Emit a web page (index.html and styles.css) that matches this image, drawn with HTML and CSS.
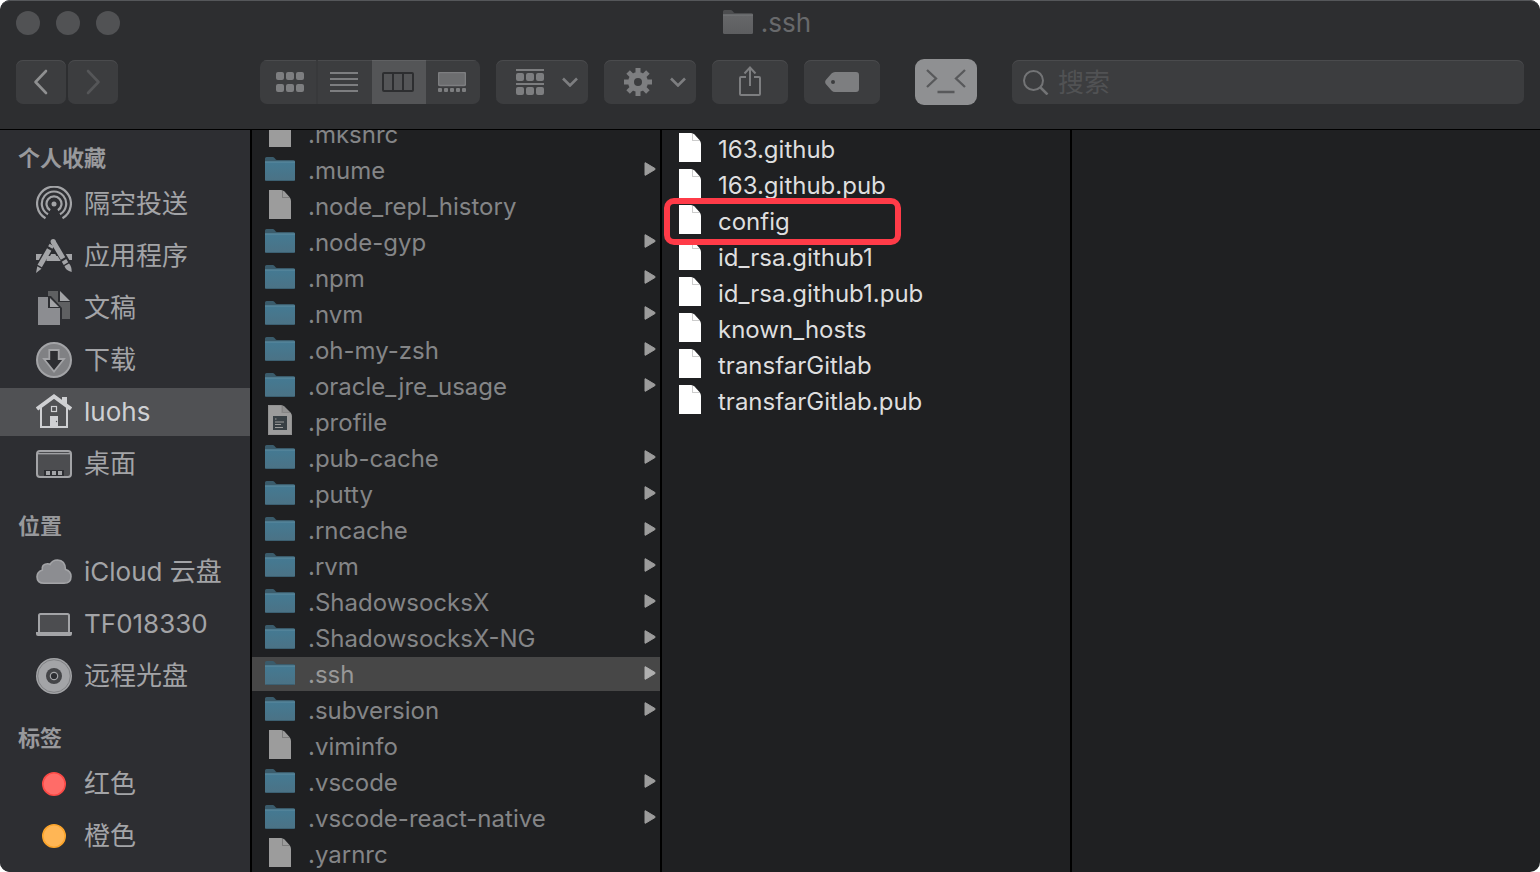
FILE: index.html
```html
<!DOCTYPE html>
<html lang="zh-CN">
<head>
<meta charset="utf-8">
<title>.ssh</title>
<link rel="stylesheet" href="styles.css">
</head>
<body>
<svg class="sprite" width="0" height="0" aria-hidden="true">
  <defs>
    <linearGradient id="folder-front" x1="0" y1="0" x2="0" y2="1">
      <stop offset="0" stop-color="#447a93"/><stop offset="1" stop-color="#4b7285"/>
    </linearGradient>
    <linearGradient id="folder-grey" x1="0" y1="0" x2="0" y2="1">
      <stop offset="0" stop-color="#666769"/><stop offset="1" stop-color="#5d5e60"/>
    </linearGradient>
    <symbol id="folder" viewBox="0 0 30 24">
      <path d="M0 6V1.500Q0 0 1.500 0H8Q9 0 10 1.500T12 3H28.500Q30 3 30 4.500V8H0Z" fill="#3a5b6b"/>
      <path d="M0 4.500H30V22.500Q30 24 28.500 24H1.500Q0 24 0 22.500Z" fill="url(#folder-front)"/>
      <path d="M0 5H30" stroke="#5f8b9f"/><path d="M1 23.500H29" stroke="#3c6072"/>
    </symbol>
    <symbol id="folder-title" viewBox="0 0 30 24">
      <path d="M0 6V1.500Q0 0 1.500 0H8Q9 0 10 1.500T12 3H28.500Q30 3 30 4.500V8H0Z" fill="#4c4d4f"/>
      <path d="M0 4.500H30V22.500Q30 24 28.500 24H1.500Q0 24 0 22.500Z" fill="url(#folder-grey)"/>
      <path d="M0 5H30" stroke="#77787a"/>
    </symbol>
    <symbol id="doc" viewBox="0 0 22 29">
      <path d="M0 0H12Q14 0 15.500 1.500L20.500 7Q22 9 22 11V29H0Z" fill="currentColor"/>
      <path d="M13.500 0.500V7.500H20.500" fill="none" stroke="#000" stroke-opacity=".2"/>
    </symbol>
    <symbol id="doc-text" viewBox="0 0 24 30">
      <path d="M0 0H13Q15 0 16.500 1.500L22.500 7.500Q24 9 24 11V30H0Z" fill="#919191"/>
      <path d="M1 1H13V8H23V29H1Z" fill="#9c9c9c"/>
      <path d="M14.500 1V7.500H22" fill="none" stroke="#858585"/>
      <rect x="5" y="11" width="14" height="14" fill="#384045"/>
      <path d="M7 14H8.500M7 17H16M7 19.500H13M7 22.500H15" stroke="#9c9c9c"/>
    </symbol>
    <symbol id="arrow" viewBox="0 0 12 14">
      <path d="M1 .8Q1 .5 1.500 .8L11 6.500Q11.500 7 11 7.500L1.500 13.200Q1 13.500 1 13.200Z" fill="currentColor" stroke="currentColor"/>
    </symbol>
    <symbol id="chevron" viewBox="0 0 16 10">
      <path d="M1 1.500L8 8.500L15 1.500" fill="none" stroke="currentColor" stroke-width="2.600"/>
    </symbol>
  </defs>
</svg>

<div class="window">
  <header class="header">
    <div class="titlebar">
      <div class="lights">
        <button class="light" aria-label="关闭"></button>
        <button class="light" aria-label="最小化"></button>
        <button class="light" aria-label="缩放"></button>
      </div>
      <h1 class="title"><svg class="folder"><use href="#folder-title"/></svg>.ssh</h1>
    </div>
    <div class="toolbar">
      <div class="nav">
        <button class="tool nav-button" aria-label="后退"><svg width="16" height="26" viewBox="0 0 16 26" fill="none" stroke="#8f9091" stroke-width="2.600" stroke-linecap="round" stroke-linejoin="round"><path d="M13 2L2.500 13L13 24"/></svg></button>
        <button class="tool nav-button" aria-label="前进"><svg width="16" height="26" viewBox="0 0 16 26" fill="none" stroke="#555658" stroke-width="2.600" stroke-linecap="round" stroke-linejoin="round"><path d="M3 2L13.500 13L3 24"/></svg></button>
      </div>
      <div class="views">
        <button class="view" aria-label="图标"><svg width="28" height="20" viewBox="0 0 28 20" fill="currentColor"><rect width="8" height="8" rx="2"/><rect x="10" width="8" height="8" rx="2"/><rect x="20" width="8" height="8" rx="2"/><rect y="12" width="8" height="8" rx="2"/><rect x="10" y="12" width="8" height="8" rx="2"/><rect x="20" y="12" width="8" height="8" rx="2"/></svg></button>
        <button class="view" aria-label="列表"><svg width="28" height="20" viewBox="0 0 28 20" stroke="currentColor" stroke-width="2"><path d="M0 1H28M0 7H28M0 13H28M0 19H28"/></svg></button>
        <button class="view view-on" aria-label="分栏" aria-pressed="true"><svg width="32" height="20" viewBox="0 0 32 20" fill="none" stroke="currentColor" stroke-width="2"><rect x="1" y="1" width="30" height="18" rx="1"/><path d="M11 1V19M21 1V19"/></svg></button>
        <button class="view" aria-label="画廊"><svg width="28" height="20" viewBox="0 0 28 20" fill="currentColor"><rect x=".5" y=".5" width="27" height="13" rx="1.500" fill="#6c6d6f" stroke="currentColor" stroke-width="1.500"/><rect y="16" width="4" height="4" rx="1"/><rect x="6" y="16" width="4" height="4" rx="1"/><rect x="12" y="16" width="4" height="4" rx="1"/><rect x="18" y="16" width="4" height="4" rx="1"/><rect x="24" y="16" width="4" height="4" rx="1"/></svg></button>
      </div>
      <button class="tool menu-button" aria-label="分组"><svg width="28" height="26" viewBox="0 0 28 26" fill="currentColor"><rect width="28" height="2"/><rect y="14" width="28" height="2"/><rect y="4" width="8" height="8" rx="2"/><rect x="10" y="4" width="8" height="8" rx="2"/><rect x="20" y="4" width="8" height="8" rx="2"/><rect y="18" width="8" height="8" rx="2"/><rect x="10" y="18" width="8" height="8" rx="2"/><rect x="20" y="18" width="8" height="8" rx="2"/></svg><svg class="chevron"><use href="#chevron"/></svg></button>
      <button class="tool menu-button" aria-label="操作"><svg width="28" height="28" viewBox="-14 -14 28 28"><g stroke="currentColor" stroke-width="5"><path d="M0 -14V-8M0 14V8M-14 0H-8M14 0H8"/><path d="M0 -14V-8M0 14V8M-14 0H-8M14 0H8" transform="rotate(45)"/></g><circle r="7" fill="none" stroke="currentColor" stroke-width="6"/></svg><svg class="chevron"><use href="#chevron"/></svg></button>
      <button class="tool wide-button" aria-label="共享"><svg width="24" height="32" viewBox="0 0 24 32" fill="none" stroke="currentColor" stroke-width="2"><path d="M8 11H3Q2 11 2 12V28Q2 29 3 29H21Q22 29 22 28V12Q22 11 21 11H16M12 20V2M6.500 7.500L12 1.500L17.500 7.500"/></svg></button>
      <button class="tool wide-button" aria-label="标记"><svg width="34" height="20" viewBox="0 0 34 20"><path fill="currentColor" fill-rule="evenodd" d="M10 0H31Q34 0 34 3V17Q34 20 31 20H10Q8 20 6.500 18.500L.8 12Q-.5 10 .8 8L6.500 1.500Q8 0 10 0ZM8 8A2 2 0 1 0 8 12A2 2 0 1 0 8 8Z"/></svg></button>
      <button class="face" aria-label="打开终端"><svg width="40" height="26" viewBox="0 0 40 26" fill="none" stroke="#58595b" stroke-width="2.300"><path d="M1 1L10 9.500L1 18M39 1L30 9.500L39 18M11.500 23H28.500"/></svg></button>
      <label class="tool search">
        <svg width="26" height="26" viewBox="0 0 26 26" fill="none" stroke="#737476" stroke-width="2"><circle cx="10.500" cy="11.500" r="9.500"/><path d="M17 18L24.500 25.500" stroke-width="2.500"/></svg>
        <input type="search" placeholder="搜索" aria-label="搜索">
      </label>
    </div>
  </header>

  <div class="body">
    <nav class="sidebar">
      <section class="group">
        <h2>个人收藏</h2>
        <ul>
          <li><a href="#airdrop"><svg viewBox="0 0 36 36" fill="none" stroke="currentColor" stroke-width="2.200"><path d="M9.500 32.200A16.900 16.900 0 1 1 26.500 32.200M12 28.300A12.200 12.200 0 1 1 24 28.300M14.100 24.200A7.500 7.500 0 1 1 21.900 24.200"/><circle cx="18" cy="18" r="2.500" fill="currentColor" stroke="none"/></svg>隔空投送</a></li>
          <li><a href="#apps"><svg viewBox="0 0 36 36"><path d="M0 19H36" stroke="currentColor" stroke-width="6"/><path d="M16 6L3 30M17 4L33 32" stroke="#2d2e32" stroke-width="8"/><path d="M10.500 20.500H25" stroke="currentColor" stroke-width="5"/><path d="M18 4L30.500 25" stroke="#2d2e32" stroke-width="8"/><path d="M15.800 7L14.300 9.600M13.200 11.600L3.700 28" stroke="currentColor" stroke-width="5"/><path d="M1.300 28.300L5.500 30.700L0 35Z" fill="currentColor"/><path d="M17.300 4L27 20.500M28 22.300L30 25.600" stroke="currentColor" stroke-width="5.200"/><circle cx="17.200" cy="3.500" r="2.600" fill="currentColor"/><path d="M28.500 28L33 25.400Q35.800 28 35.700 34Q29.500 32.500 28.500 28Z" fill="currentColor"/></svg>应用程序</a></li>
          <li><a href="#documents"><svg viewBox="0 0 36 36"><path d="M12 1H22V12H34V29H26V18L15 6H12Z" fill="#5f6062"/><path d="M24 1V11H34Z" fill="#a3a4a7"/><path d="M2 7H12V18H24V35H2Z" fill="#8c8d91"/><path d="M14 8V17H23Z" fill="#a3a4a7"/></svg>文稿</a></li>
          <li><a href="#downloads"><svg viewBox="0 0 36 36"><circle cx="18" cy="18" r="17" fill="#808184" stroke="currentColor" stroke-width="2"/><path d="M13.300 8H22.700V17H28L18 29.500L8 17H13.300Z" fill="#2d2e32" stroke="currentColor" stroke-width="1.800"/></svg>下载</a></li>
          <li><a class="current" href="#home" aria-current="page"><svg viewBox="0 0 36 36"><path d="M26 3H31V14L26 9Z" fill="currentColor"/><path d="M5 13V33H31V13" fill="none" stroke="currentColor" stroke-width="2"/><path d="M1 15L18 2.500L35 15" fill="none" stroke="currentColor" stroke-width="4"/><rect x="15.500" y="12.500" width="5" height="5" fill="none" stroke="currentColor" stroke-width="1.200"/><path d="M14 22H22V33H14Z" fill="currentColor"/><circle cx="20.500" cy="27.500" r=".7" fill="#505154"/></svg>luohs</a></li>
          <li><a href="#desktop"><svg viewBox="0 0 36 36"><rect x="1" y="5" width="34" height="26" rx="3" fill="#4c4d50" stroke="currentColor" stroke-width="2"/><path d="M2 7.700H34" stroke="currentColor" stroke-width="1.300"/><path d="M8 24H28V30H8Z" fill="#2d2e32"/><path d="M10 25H14V29H10ZM16 25H20V29H16ZM22 25H26V29H22Z" fill="currentColor"/></svg>桌面</a></li>
        </ul>
      </section>
      <section class="group">
        <h2>位置</h2>
        <ul>
          <li><a href="#icloud"><svg viewBox="0 0 36 36"><path d="M8 29.300Q1 29.300 1 22.800Q1 17.800 6.300 16Q5.500 10.200 11 9.800Q13 9.600 14 10.500Q16.500 6 21.500 6Q29.300 6.300 29.500 15.500Q35 17 35 22.500Q35 29.300 28 29.300Z" fill="#8c8d91" stroke="currentColor" stroke-width="1.600"/></svg>iCloud 云盘</a></li>
          <li><a href="#tf018330"><svg viewBox="0 0 36 36"><rect x="3" y="8" width="30" height="19" rx="1.500" fill="#4c4d50" stroke="currentColor" stroke-width="2"/><path d="M0 26H36V28Q36 30 34 30H2Q0 30 0 28Z" fill="currentColor"/></svg>TF018330</a></li>
          <li><a href="#disc"><svg viewBox="0 0 36 36"><circle cx="18" cy="18" r="18" fill="#a3a4a7"/><circle cx="18" cy="18" r="16.300" fill="none" stroke="#77787b" stroke-width=".8"/><circle cx="18" cy="18" r="8" fill="#444548"/><circle cx="18" cy="18" r="3.700" fill="#2d2e32" stroke="#a3a4a7" stroke-width="1.200"/></svg>远程光盘</a></li>
        </ul>
      </section>
      <section class="group">
        <h2>标签</h2>
        <ul>
          <li><a href="#red"><svg viewBox="0 0 36 36"><circle cx="18" cy="18" r="11.200" fill="#ff6c68" stroke="#fb4a46" stroke-width="1.600"/></svg>红色</a></li>
          <li><a href="#orange"><svg viewBox="0 0 36 36"><circle cx="18" cy="18" r="11.200" fill="#ffb655" stroke="#fba42b" stroke-width="1.600"/></svg>橙色</a></li>
        </ul>
      </section>
    </nav>

    <ul class="column column-home">
      <li><button class="row"><span class="icon"><svg class="doc"><use href="#doc"/></svg></span><span class="name">.mkshrc</span></button></li>
      <li><button class="row"><span class="icon"><svg class="folder"><use href="#folder"/></svg></span><span class="name">.mume</span><svg class="arrow"><use href="#arrow"/></svg></button></li>
      <li><button class="row"><span class="icon"><svg class="doc"><use href="#doc"/></svg></span><span class="name">.node_repl_history</span></button></li>
      <li><button class="row"><span class="icon"><svg class="folder"><use href="#folder"/></svg></span><span class="name">.node-gyp</span><svg class="arrow"><use href="#arrow"/></svg></button></li>
      <li><button class="row"><span class="icon"><svg class="folder"><use href="#folder"/></svg></span><span class="name">.npm</span><svg class="arrow"><use href="#arrow"/></svg></button></li>
      <li><button class="row"><span class="icon"><svg class="folder"><use href="#folder"/></svg></span><span class="name">.nvm</span><svg class="arrow"><use href="#arrow"/></svg></button></li>
      <li><button class="row"><span class="icon"><svg class="folder"><use href="#folder"/></svg></span><span class="name">.oh-my-zsh</span><svg class="arrow"><use href="#arrow"/></svg></button></li>
      <li><button class="row"><span class="icon"><svg class="folder"><use href="#folder"/></svg></span><span class="name">.oracle_jre_usage</span><svg class="arrow"><use href="#arrow"/></svg></button></li>
      <li><button class="row"><span class="icon"><svg class="doc-text"><use href="#doc-text"/></svg></span><span class="name">.profile</span></button></li>
      <li><button class="row"><span class="icon"><svg class="folder"><use href="#folder"/></svg></span><span class="name">.pub-cache</span><svg class="arrow"><use href="#arrow"/></svg></button></li>
      <li><button class="row"><span class="icon"><svg class="folder"><use href="#folder"/></svg></span><span class="name">.putty</span><svg class="arrow"><use href="#arrow"/></svg></button></li>
      <li><button class="row"><span class="icon"><svg class="folder"><use href="#folder"/></svg></span><span class="name">.rncache</span><svg class="arrow"><use href="#arrow"/></svg></button></li>
      <li><button class="row"><span class="icon"><svg class="folder"><use href="#folder"/></svg></span><span class="name">.rvm</span><svg class="arrow"><use href="#arrow"/></svg></button></li>
      <li><button class="row"><span class="icon"><svg class="folder"><use href="#folder"/></svg></span><span class="name">.ShadowsocksX</span><svg class="arrow"><use href="#arrow"/></svg></button></li>
      <li><button class="row"><span class="icon"><svg class="folder"><use href="#folder"/></svg></span><span class="name">.ShadowsocksX-NG</span><svg class="arrow"><use href="#arrow"/></svg></button></li>
      <li><button class="row row-open"><span class="icon"><svg class="folder"><use href="#folder"/></svg></span><span class="name">.ssh</span><svg class="arrow"><use href="#arrow"/></svg></button></li>
      <li><button class="row"><span class="icon"><svg class="folder"><use href="#folder"/></svg></span><span class="name">.subversion</span><svg class="arrow"><use href="#arrow"/></svg></button></li>
      <li><button class="row"><span class="icon"><svg class="doc"><use href="#doc"/></svg></span><span class="name">.viminfo</span></button></li>
      <li><button class="row"><span class="icon"><svg class="folder"><use href="#folder"/></svg></span><span class="name">.vscode</span><svg class="arrow"><use href="#arrow"/></svg></button></li>
      <li><button class="row"><span class="icon"><svg class="folder"><use href="#folder"/></svg></span><span class="name">.vscode-react-native</span><svg class="arrow"><use href="#arrow"/></svg></button></li>
      <li><button class="row"><span class="icon"><svg class="doc"><use href="#doc"/></svg></span><span class="name">.yarnrc</span></button></li>
    </ul>

    <ul class="column column-ssh">
      <li><button class="row"><span class="icon"><svg class="doc"><use href="#doc"/></svg></span><span class="name">163.github</span></button></li>
      <li><button class="row"><span class="icon"><svg class="doc"><use href="#doc"/></svg></span><span class="name">163.github.pub</span></button></li>
      <li class="marked"><button class="row"><span class="icon"><svg class="doc"><use href="#doc"/></svg></span><span class="name">config</span></button></li>
      <li><button class="row"><span class="icon"><svg class="doc"><use href="#doc"/></svg></span><span class="name">id_rsa.github1</span></button></li>
      <li><button class="row"><span class="icon"><svg class="doc"><use href="#doc"/></svg></span><span class="name">id_rsa.github1.pub</span></button></li>
      <li><button class="row"><span class="icon"><svg class="doc"><use href="#doc"/></svg></span><span class="name">known_hosts</span></button></li>
      <li><button class="row"><span class="icon"><svg class="doc"><use href="#doc"/></svg></span><span class="name">transfarGitlab</span></button></li>
      <li><button class="row"><span class="icon"><svg class="doc"><use href="#doc"/></svg></span><span class="name">transfarGitlab.pub</span></button></li>
    </ul>

    <div class="preview"></div>
  </div>
</div>
</body>
</html>
```
FILE: styles.css
```css
*, *::after { box-sizing: border-box; }

body {
  margin: 0;
  background: #fff;
  font-family: Inter, "Noto Sans CJK SC", sans-serif;
  font-size: 24px;
}

h1, h2, ul { margin: 0; padding: 0; font-weight: 400; list-style: none; }
svg { display: block; flex: none; }
.sprite { position: absolute; }

button, input {
  margin: 0;
  padding: 0;
  border: 0;
  background: none;
  color: inherit;
  font: inherit;
}

.window {
  display: flex;
  flex-direction: column;
  height: 100vh;
  overflow: hidden;
  border-radius: 10px;
  background: #1f2022;
}

/* Header */
.header {
  flex: none;
  height: 130px;
  border-top: 1px solid #55575a;
  border-bottom: 1px solid #000;
  border-radius: 10px 10px 0 0;
  background: #2d2e30;
}
.titlebar {
  display: grid;
  grid-template-columns: 1fr auto 1fr;
  align-items: center;
  height: 43px;
  padding: 0 22px 0 16px;
}
.lights { display: flex; gap: 16px; }
.light { width: 24px; height: 24px; border-radius: 50%; background: #515254; }
.title {
  display: flex;
  align-items: center;
  gap: 8px;
  color: #68696b;
  font-size: 26px;
  line-height: 32px;
}
.title .folder { margin-bottom: 2px; }

.toolbar {
  display: flex;
  align-items: center;
  height: 44px;
  margin-top: 16px;
  padding: 0 16px;
  gap: 16px;
  color: #7d7e80;
}
.tool, .view { background: #3c3d3f; box-shadow: inset 0 1px #4a4b4d; }
.tool {
  display: flex;
  align-items: center;
  justify-content: center;
  height: 44px;
  border-radius: 7px;
}
.nav { display: flex; gap: 2px; margin-right: 126px; }
.nav-button { width: 50px; }
.views { display: flex; height: 44px; overflow: hidden; border-radius: 7px; }
.view { display: flex; align-items: center; justify-content: center; width: 54px; padding-right: 2px; }
.view:first-child { width: 58px; padding: 0 0 0 4px; border-right: 2px solid #38393b; }
.view-on { background: #545557; color: #2d2e30; box-shadow: inset 0 1px #606163; }
.menu-button { width: 92px; justify-content: space-between; padding: 0 10px 0 20px; }
.chevron { width: 16px; height: 10px; }
.wide-button { width: 76px; }
.face {
  display: flex;
  justify-content: center;
  align-items: center;
  width: 62px;
  height: 46px;
  margin: 0 19px;
  border-radius: 9px;
  background: #8f9092;
}
.search { flex: 1; justify-content: flex-start; gap: 9px; padding: 0 11px; }
.search input { flex: 1; min-width: 0; outline: 0; font-size: 26px; }
.search input::placeholder { color: #515254; opacity: 1; }

/* Body */
.body { display: flex; flex: 1; min-height: 0; }

.sidebar {
  flex: none;
  width: 252px;
  padding-top: 6px;
  border-right: 2px solid #000;
  overflow: hidden;
  background: #2d2e32;
  color: #a3a4a7;
}
.group { margin-bottom: 16px; }
.group h2 { padding-left: 18px; font-size: 22px; font-weight: 600; line-height: 44px; color: #98999c; }
.group ul { display: grid; gap: 4px; }
.group a {
  display: flex;
  align-items: center;
  height: 48px;
  padding-left: 36px;
  color: inherit;
  font-size: 26px;
  line-height: 48px;
  text-decoration: none;
}
.group a svg { width: 36px; height: 36px; margin-right: 12px; }
.group .current { background: #505154; color: #cfd0d3; }

.column { flex: none; width: 410px; overflow: hidden; border-right: 2px solid #000; }
.column li { position: relative; padding: 1px 0; }
.row {
  display: flex;
  align-items: center;
  gap: 12px;
  width: 100%;
  height: 34px;
  padding: 0 4px 0 12px;
  text-align: left;
}
.icon { display: flex; justify-content: center; width: 32px; padding-bottom: 2px; }
.name { flex: 1; }
.folder { width: 30px; height: 24px; }
.doc { width: 22px; height: 29px; margin-bottom: 1px; }
.doc-text { width: 24px; height: 30px; margin-bottom: 2px; }
.arrow { width: 12px; height: 14px; margin-bottom: 2px; }

/* The home column is scrolled, so its first row is partly hidden */
.column-home { color: #848587; }
.column-home li:first-child { margin-top: -14px; }
.column-home .doc, .column-home .arrow { color: #9c9c9c; }
.row-open { background: #474747; color: #989898; }
.column-home .row-open .arrow { color: #b0b0b0; }

.column-ssh { padding-top: 1px; color: #dededf; }
.column-ssh .doc { color: #fff; }
.marked::after {
  content: "";
  position: absolute;
  z-index: 1;
  top: -5px;
  left: 2px;
  width: 237px;
  height: 47px;
  border: 6px solid #ff3b48;
  border-radius: 10px;
  pointer-events: none;
}

.preview { flex: 1; }
```
